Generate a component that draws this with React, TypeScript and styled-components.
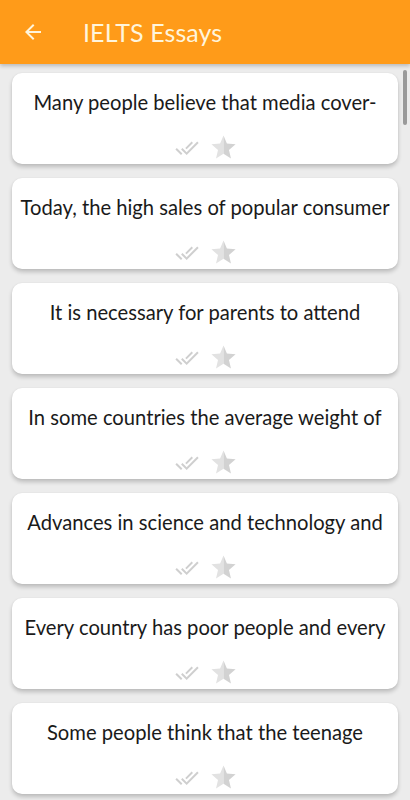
import React from "react";
import styled, { createGlobalStyle } from "styled-components";

const Global = createGlobalStyle`
  html, body { margin: 0; padding: 0; background: #ececec; }
  body { font-family: Lato, "Noto Sans", sans-serif; overflow: hidden; }
`;

const Page = styled.div`
  width: 410px;
  height: 800px;
  display: flex;
  flex-direction: column;
  background: #ececec;
  overflow: hidden;
  position: relative;
`;

const Header = styled.header`
  height: 64px;
  flex: none;
  background: #ff9b19;
  display: flex;
  align-items: center;
  padding-left: 21px;
  gap: 38px;
  box-shadow: 0 2px 4px rgba(0, 0, 0, 0.22);
  position: relative;
  z-index: 2;
`;

const Title = styled.h1`
  margin: 0;
  font-family: Lato, sans-serif;
  font-weight: 400;
  font-size: 25px;
  color: #fff5dc;
  letter-spacing: 0.1px;
`;

const List = styled.main`
  display: flex;
  flex-direction: column;
  gap: 14px;
  padding: 9px 12px 0 12px;
`;

const Card = styled.div`
  height: 91px;
  flex: none;
  background: #fff;
  border-radius: 10px;
  box-shadow: 0 3px 4px rgba(0, 0, 0, 0.2), 0 0 2px rgba(0, 0, 0, 0.06);
  display: flex;
  flex-direction: column;
  align-items: center;
`;

const CardText = styled.div`
  margin-top: 17px;
  font-size: 20.2px;
  font-weight: 400;
  color: #1a1a1a;
  white-space: nowrap;
  line-height: 24px;
`;

const Icons = styled.div`
  margin-top: 19px;
  display: flex;
  align-items: center;
  gap: 9px;
  margin-left: 2px;
`;

const ScrollThumb = styled.div`
  position: absolute;
  right: 3px;
  top: 70px;
  width: 4px;
  height: 55px;
  border-radius: 2px;
  background: #9a9a9a;
  z-index: 3;
`;

const BackArrow = () => (
  <svg width="24" height="24" viewBox="0 0 24 24">
    <path
      d="M20 11H7.83l5.59-5.59L12 4l-8 8 8 8 1.41-1.41L7.83 13H20v-2z"
      fill="#fff5dc"
    />
  </svg>
);

const DoneAll = () => (
  <svg width="26" height="20" viewBox="0 2 24 20">
    <path
      d="M18 7l-1.41-1.41-6.34 6.34 1.41 1.41L18 7zm4.24-1.41L11.66 16.17 7.48 12l-1.41 1.41L11.66 19l12-12-1.42-1.41zM.41 13.41L6 19l1.41-1.41L1.83 12 .41 13.41z"
      fill="#cfcfcf"
    />
  </svg>
);

const Star = () => (
  <svg width="29" height="29" viewBox="0 0 24 24">
    <path d="M12 2 9.19 8.63 2 9.24l5.46 4.73L5.82 21 12 17.27z" fill="#e2e2e2" />
    <path d="M12 2l2.81 6.63 7.19.61-5.46 4.73L18.18 21 12 17.27z" fill="#d2d2d2" />
  </svg>
);

const essays = [
  "Many people believe that media cover-",
  "Today, the high sales of popular consumer",
  "It is necessary for parents to attend",
  "In some countries the average weight of",
  "Advances in science and technology and",
  "Every country has poor people and every",
  "Some people think that the teenage",
];

export default function App() {
  return (
    <Page>
      <Global />
      <Header>
        <BackArrow />
        <Title>IELTS Essays</Title>
      </Header>
      <ScrollThumb />
      <List>
        {essays.map((t) => (
          <Card key={t}>
            <CardText>{t}</CardText>
            <Icons>
              <DoneAll />
              <Star />
            </Icons>
          </Card>
        ))}
      </List>
    </Page>
  );
}
